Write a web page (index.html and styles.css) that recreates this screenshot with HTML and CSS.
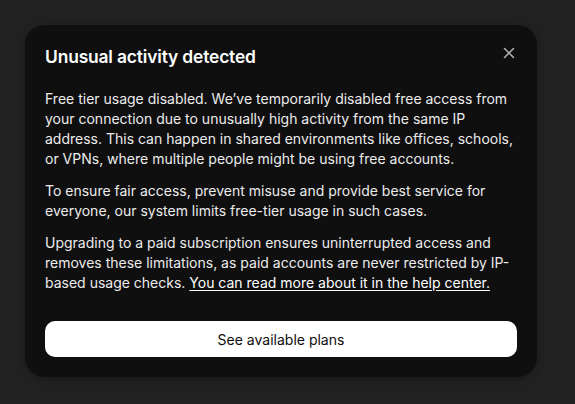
FILE: index.html
```html
<!DOCTYPE html>
<html lang="en">
<head>
<meta charset="utf-8">
<title>Unusual activity detected</title>
<link rel="stylesheet" href="styles.css">
</head>
<body>
<div class="backdrop">
  <div class="dialog" role="dialog" aria-labelledby="dlg-title">
    <div class="dialog-header">
      <h2 id="dlg-title" class="dialog-title">Unusual activity detected</h2>
      <button class="close-btn" aria-label="Close">
        <svg width="12" height="12" viewBox="0 0 12 12" fill="none" stroke="currentColor" stroke-width="1.5" stroke-linecap="round">
          <path d="M1.5 1.5 L10.5 10.5 M10.5 1.5 L1.5 10.5"/>
        </svg>
      </button>
    </div>
    <div class="dialog-body">
      <p>Free tier usage disabled. We’ve temporarily disabled free access from your connection due to unusually high activity from the same IP address. This can happen in shared environments like offices, schools, or VPNs, where multiple people might be using free accounts.</p>
      <p>To ensure fair access, prevent misuse and provide best service for everyone, our system limits free-tier usage in such cases.</p>
      <p>Upgrading to a paid subscription ensures uninterrupted access and removes these limitations, as paid accounts are never restricted by IP-based usage checks. <a href="#" class="help-link">You can read more about it in the help center.</a></p>
    </div>
    <button class="primary-btn">See available plans</button>
  </div>
</div>
</body>
</html>
```

FILE: styles.css
```css
* { box-sizing: border-box; }

html, body {
  margin: 0;
  padding: 0;
  height: 100%;
  background: #212121;
}

body {
  font-family: Inter, "Noto Sans", "Liberation Sans", sans-serif;
  color: #ececec;
  -webkit-font-smoothing: antialiased;
}

.backdrop {
  padding: 25px 38px 0 25px;
}

.dialog {
  width: 512px;
  background: #0f0f0f;
  border-radius: 20px;
  padding: 20px;
  display: flex;
  flex-direction: column;
  box-shadow: 0 2px 6px rgba(0, 0, 0, 0.25);
}

.dialog-header {
  display: flex;
  align-items: flex-start;
  justify-content: space-between;
}

.dialog-title {
  margin: 0;
  font-size: 17.4px;
  line-height: 24px;
  font-weight: 600;
  color: #ffffff;
  letter-spacing: -0.15px;
}

.close-btn {
  background: none;
  border: 0;
  padding: 0;
  width: 20px;
  height: 20px;
  margin: -2px -2px 0 0;
  color: #b4b4b4;
  display: flex;
  align-items: center;
  justify-content: center;
  cursor: pointer;
}

.dialog-body {
  margin-top: 20px;
  display: flex;
  flex-direction: column;
  gap: 12px;
}

.dialog-body p {
  margin: 0;
  font-size: 14px;
  line-height: 20px;
  color: #ececec;
}

.help-link {
  color: #ffffff;
  text-decoration: underline;
  text-underline-offset: 2px;
}

.primary-btn {
  margin-top: 28px;
  height: 36px;
  width: 100%;
  border: 0;
  border-radius: 10px;
  background: #ffffff;
  color: #0d0d0d;
  font-family: inherit;
  font-size: 14px;
  font-weight: 400;
  cursor: pointer;
}
```
